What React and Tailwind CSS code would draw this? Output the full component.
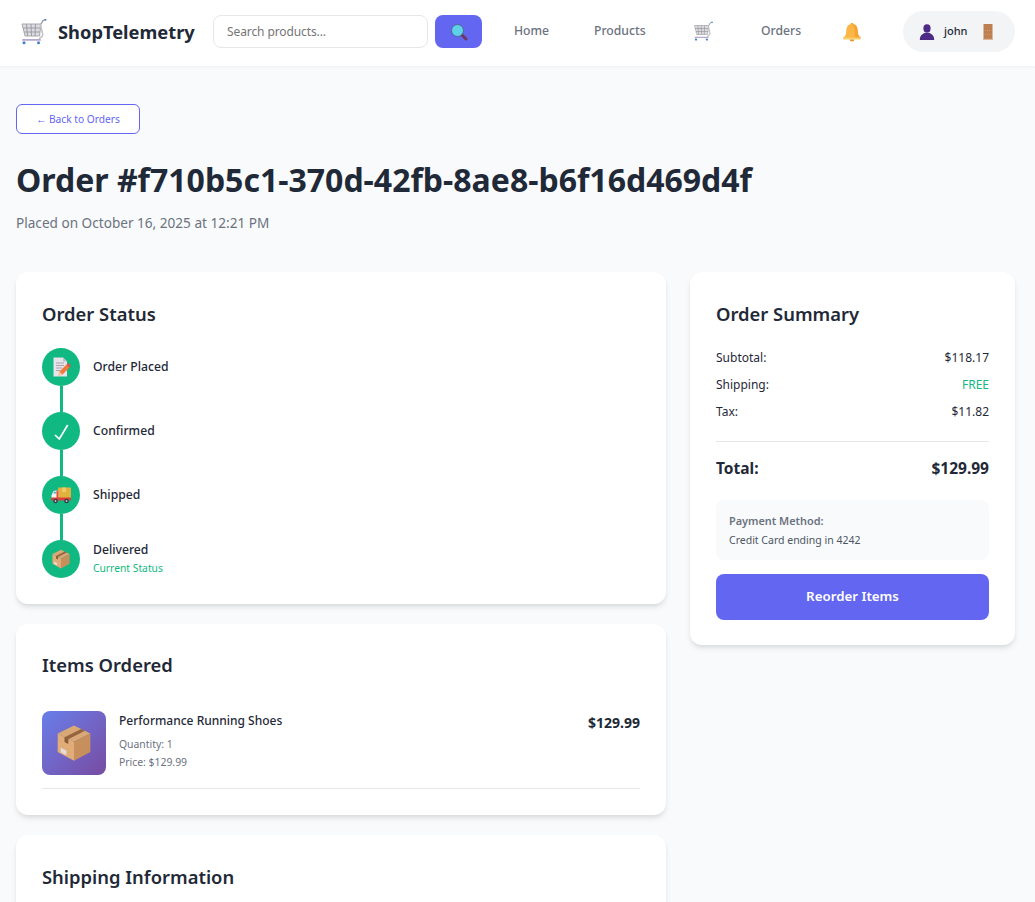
import React from 'react'

function CartIcon({ size = 28 }) {
  return (
    <svg width={size} height={size} viewBox="0 0 28 28" fill="none">
      <path d="M2 6 L21 6 L19.5 18 L5 18 Z" fill="#dcdce0" stroke="#a8a8b0" strokeWidth="1" />
      <path d="M6.5 6 L7.5 18 M11 6 L11.5 18 M15.5 6 L15 18 M3 10 L20.5 10 M4 14 L20 14" stroke="#96969f" strokeWidth="0.9" />
      <path d="M21 6 L23 2.5 L25.5 1.8" stroke="#96969f" strokeWidth="1.3" />
      <path d="M24 1 L26.5 1 L26 3 Z" fill="#3b82c4" />
      <path d="M20 6 L22.5 15 Q23.5 18 20.5 19.5 L19 21" stroke="#c0c0c6" strokeWidth="1.5" />
      <rect x="2" y="21" width="19" height="1.8" rx="0.9" fill="#b7a6cf" />
      <circle cx="4" cy="24.8" r="1.5" fill="#3b82c4" />
      <circle cx="18.5" cy="24.8" r="1.5" fill="#3b82c4" />
    </svg>
  )
}

function SearchIcon() {
  return (
    <svg width="18" height="18" viewBox="0 0 18 18" fill="none">
      <path d="M11 11 L16 16" stroke="#6b3a5e" strokeWidth="3" strokeLinecap="round" />
      <circle cx="7.5" cy="7.5" r="6" fill="#5fd0ea" stroke="#4b6b8c" strokeWidth="1" />
    </svg>
  )
}

function BellIcon() {
  return (
    <svg width="20" height="20" viewBox="0 0 20 20" fill="none">
      <circle cx="10" cy="2.4" r="1.6" fill="#f0a63a" />
      <path d="M10 2 C5 2 4.4 6 4.2 10 C4 13 3 14.5 1 16 L19 16 C17 14.5 16 13 15.8 10 C15.6 6 15 2 10 2 Z" fill="#fbb648" />
      <path d="M10 2 C15 2 15.6 6 15.8 10 C16 13 17 14.5 19 16 L13 16 C13 10 13 5 10 2 Z" fill="#f7a233" />
      <rect x="1" y="15.6" width="18" height="2" rx="1" fill="#f5d06a" />
      <path d="M7.7 17.6 H12.3 A2.3 2 0 0 1 7.7 17.6 Z" fill="#e8912a" />
    </svg>
  )
}

function UserIcon() {
  return (
    <svg width="16" height="16" viewBox="0 0 16 16" fill="#4c2a85">
      <ellipse cx="8" cy="4.5" rx="3.6" ry="4.2" />
      <path d="M0.8 16 C0.8 11.5 3.5 9.8 5.8 9 L10.2 9 C12.5 9.8 15.2 11.5 15.2 16 Z" />
    </svg>
  )
}

function DoorIcon() {
  return (
    <svg width="10" height="16" viewBox="0 0 10 16">
      <rect x="0.5" y="0" width="9" height="16" fill="#bd7f52" />
      <rect x="0.5" y="14.8" width="9" height="1.2" fill="#d9b59a" />
      <path d="M2 6.6 H8.5 M2 10.4 H8.5" stroke="#dfa066" strokeWidth="0.8" strokeDasharray="1 1" />
    </svg>
  )
}

function DocIcon() {
  return (
    <svg width="20" height="20" viewBox="0 0 20 20" fill="none">
      <path d="M2.5 0.5 H12 L16 4.5 V19.5 H2.5 Z" fill="#e6e3ea" />
      <path d="M12 0.5 L16 4.5 H12 Z" fill="#c3bfca" />
      <path d="M5 6 H13 M5 8.5 H13 M5 11 H11 M5 13.5 H9" stroke="#a8a4b0" strokeWidth="1" />
      <path d="M7.5 18.5 L8.5 14.5 L15.5 7.5 L18.5 10.5 L11.5 17.5 Z" fill="#f2793a" />
      <path d="M15.5 7.5 L17 6 L20 9 L18.5 10.5 Z" fill="#e2504a" />
      <path d="M7.5 18.5 L8.5 14.5 L11.5 17.5 Z" fill="#f7c9a0" />
    </svg>
  )
}

function CheckIcon() {
  return (
    <svg width="20" height="20" viewBox="0 0 20 20" fill="none">
      <path d="M4 14 L8.3 18 L16.7 4" stroke="white" strokeWidth="1.7" />
    </svg>
  )
}

function TruckIcon() {
  return (
    <svg width="20" height="20" viewBox="0 0 20 20" fill="none">
      <rect x="7" y="2.5" width="13" height="11" rx="0.5" fill="#e2b33c" />
      <path d="M11 2.5 H15 V7 H11 Z" fill="#eccb6a" />
      <path d="M1.5 8 C2 6.5 3 5.5 4.5 5.5 H7.5 V14 H0.5 V10.5 Z" fill="#f5f1ec" />
      <path d="M2.2 8.5 L3.2 6.8 H5.5 V8.5 Z" fill="#5aa5de" />
      <rect x="5.5" y="5.5" width="2" height="8.5" fill="#e5533f" />
      <rect x="0" y="12.5" width="20" height="3" rx="0.8" fill="#d8403a" />
      <circle cx="4.5" cy="16" r="2.3" fill="#3a3a44" />
      <circle cx="4.5" cy="16" r="0.9" fill="#c8c8d0" />
      <circle cx="15.5" cy="16" r="2.3" fill="#3a3a44" />
      <circle cx="15.5" cy="16" r="0.9" fill="#c8c8d0" />
    </svg>
  )
}

function BoxIcon({ size = 20 }) {
  return (
    <svg width={size} height={size} viewBox="0 0 20 20" fill="none">
      <path d="M10 0.8 L18.6 5 L10 9.4 L1.4 5 Z" fill="#d9a877" />
      <path d="M1.4 5 L10 9.4 V19.4 L1.4 14.8 Z" fill="#e0ad78" />
      <path d="M18.6 5 L10 9.4 V19.4 L18.6 14.8 Z" fill="#c78f5c" />
      <path d="M5 7 L13.8 2.6 L15.8 3.6 L7 8 Z" fill="#96653f" />
      <path d="M5 6.8 L7 7.9 V10.5 L5 9.5 Z" fill="#8a5c39" />
      <path d="M3 12.5 L6 14 V16.4 L3 14.9 Z" fill="#e3dcd9" />
    </svg>
  )
}

function StatusStep({ icon, label, sub, line }) {
  return (
    <div className="relative flex items-center gap-[13px] h-[38px] mb-[26px] last:mb-0">
      <div className="relative z-10 flex items-center justify-center w-[38px] h-[38px] rounded-full bg-[#10b981] shrink-0">
        {icon}
      </div>
      {line && <div className="absolute left-[18px] top-[38px] w-[3px] h-[26px] bg-[#10b981]" />}
      <div className={sub ? '-mt-[2px]' : ''}>
        <div className="text-[12.2px] leading-[18px] font-medium text-[#1f2937]">{label}</div>
        {sub && <div className="text-[10.3px] leading-[15px] mt-[2px] text-[#10b981]">{sub}</div>}
      </div>
    </div>
  )
}

function SummaryRow({ label, value, green }) {
  return (
    <div className="flex justify-between text-[12px] leading-[18px] mb-[9px] text-[#1f2937]">
      <span>{label}</span>
      <span className={green ? 'text-[#10b981]' : ''}>{value}</span>
    </div>
  )
}

const cardClass = 'bg-white rounded-xl shadow-[0_4px_6px_-1px_rgba(0,0,0,0.1),0_2px_4px_-1px_rgba(0,0,0,0.06)] p-[26px]'

export default function App() {
  return (
    <div className="h-[902px] overflow-hidden bg-[#f9fafb] font-['Noto_Sans',sans-serif] text-[#1f2937]">
      <nav className="flex items-center h-[66px] pb-[3px] bg-white shadow-[0_1px_3px_rgba(0,0,0,0.05)] pl-5 pr-5">
        <div className="flex items-center gap-[10px] w-[193px] shrink-0">
          <CartIcon />
          <span className="text-[18.3px] font-bold text-[#1f2937]">ShopTelemetry</span>
        </div>
        <input
          className="w-[215px] h-[33px] border border-[#e5e7eb] rounded-lg px-[13px] text-[12px] tracking-[-0.1px] placeholder:text-[#757575] outline-none"
          placeholder="Search products..."
        />
        <button className="flex items-center justify-center w-[47px] h-[33px] ml-[7px] rounded-lg bg-[#6366f1]">
          <SearchIcon />
        </button>
        <div className="ml-[32px] w-[60px] text-[12.2px] font-medium text-[#6b7280]">Home</div>
        <div className="ml-[20px] w-[70px] text-[12.2px] font-medium text-[#6b7280]">Products</div>
        <div className="ml-[29px]"><CartIcon size={21} /></div>
        <div className="ml-[47px] text-[12.2px] font-medium text-[#6b7280]">Orders</div>
        <div className="ml-[41px]"><BellIcon /></div>
        <div className="ml-auto flex items-center w-[112px] h-[41px] rounded-full bg-[#f3f4f6] pl-[16px]">
          <UserIcon />
          <span className="ml-[9px] text-[11px] font-medium text-[#1f2937]">john</span>
          <span className="ml-[15px]"><DoorIcon /></span>
        </div>
      </nav>

      <main className="pl-4 pr-5 pt-[38px]">
        <button className="h-[30px] w-[124px] pt-[2px] rounded-md border border-[#6366f1] bg-white text-[10.2px] text-[#6366f1]">
          ← Back to Orders
        </button>
        <h1 className="mt-[22px] text-[32px] leading-[48px] font-bold text-[#1f2937]">
          Order #f710b5c1-370d-42fb-8ae8-b6f16d469d4f
        </h1>
        <p className="mt-[9px] text-[13.6px] leading-[20px] text-[#6b7280]">Placed on October 16, 2025 at 12:21 PM</p>

        <div className="grid grid-cols-[2fr_1fr] gap-6 mt-[39px] items-start">
          <div className="flex flex-col gap-5">
            <section className={cardClass}>
              <h2 className="text-[18.4px] leading-[30px] font-semibold mb-[19px] mt-[1px]">Order Status</h2>
              <StatusStep icon={<DocIcon />} label="Order Placed" line />
              <StatusStep icon={<CheckIcon />} label="Confirmed" line />
              <StatusStep icon={<TruckIcon />} label="Shipped" line />
              <StatusStep icon={<BoxIcon />} label="Delivered" sub="Current Status" />
            </section>

            <section className={cardClass}>
              <h2 className="text-[18.4px] leading-[30px] font-semibold mb-[31px]">Items Ordered</h2>
              <div className="flex pb-[13px] border-b border-[#e5e7eb]">
                <div className="flex items-center justify-center w-[64px] h-[64px] rounded-lg bg-gradient-to-br from-[#667eea] to-[#764ba2] shrink-0">
                  <BoxIcon size={38} />
                </div>
                <div className="ml-[13px] flex-1 pt-[1px]">
                  <div className="text-[12px] leading-[18px] font-medium">Performance Running Shoes</div>
                  <div className="mt-[5px] text-[10.4px] leading-[18px] text-[#6b7280]">Quantity: 1</div>
                  <div className="text-[10.4px] leading-[18px] text-[#6b7280]">Price: $129.99</div>
                </div>
                <div className="text-[14px] leading-[24px] font-bold">$129.99</div>
              </div>
            </section>

            <section className={cardClass}>
              <h2 className="text-[18.4px] leading-[30px] font-semibold mt-[1px]">Shipping Information</h2>
            </section>
          </div>

          <aside className={cardClass + ' pb-[25px]'}>
            <h2 className="text-[18.4px] leading-[30px] font-semibold mb-[20px] mt-[1px]">Order Summary</h2>
            <SummaryRow label="Subtotal:" value="$118.17" />
            <SummaryRow label="Shipping:" value="FREE" green />
            <SummaryRow label="Tax:" value="$11.82" />
            <div className="border-t border-[#e5e7eb] mt-[20px] pt-[14px] flex justify-between text-[15.5px] leading-[24px] font-bold">
              <span>Total:</span>
              <span>$129.99</span>
            </div>
            <div className="mt-[20px] rounded-lg bg-[#f9fafb] px-[13px] pt-[13px] h-[60px]">
              <div className="text-[10.9px] leading-[16px] font-semibold text-[#6b7280]">Payment Method:</div>
              <div className="mt-[3px] text-[10.5px] leading-[16px] text-[#4b5563]">Credit Card ending in 4242</div>
            </div>
            <button className="mt-[14px] w-full h-[46px] rounded-lg bg-[#6366f1] text-[13.3px] font-semibold text-white">
              Reorder Items
            </button>
          </aside>
        </div>
      </main>
    </div>
  )
}
